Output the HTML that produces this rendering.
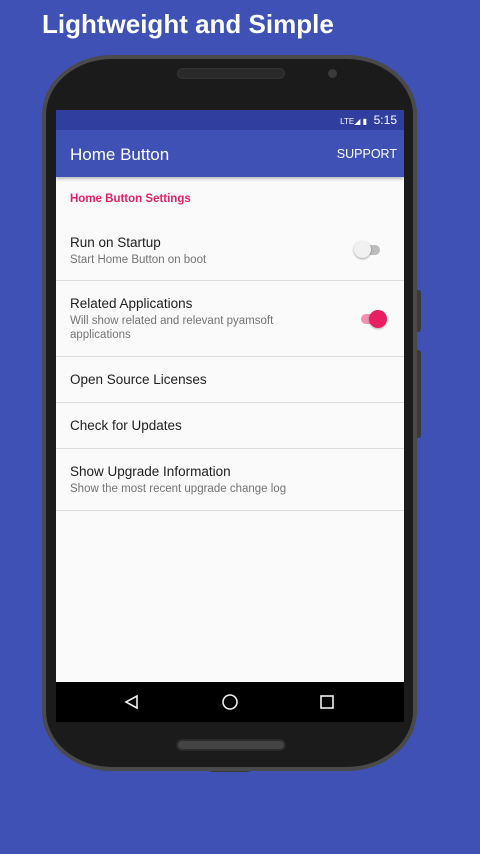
<!DOCTYPE html>
<html><head><style>
*{margin:0;padding:0;box-sizing:border-box}
body{width:480px;height:854px;background:#3f51b5;position:relative;overflow:hidden;font-family:"Liberation Sans",sans-serif}
.title{position:absolute;left:42px;top:9px;color:#fff;font-size:26px;font-weight:bold;letter-spacing:0}
.btn{position:absolute;background:#3a3a3a;border-radius:3px}
.phone{position:absolute;left:42px;top:55px;width:375px;height:716px;background:#4a4a4a;border-radius:70px/60px}
.inner{position:absolute;left:4px;top:4px;right:4px;bottom:4px;background:#1b1b1b;border-radius:66px/56px}
.spk{position:absolute;left:177px;top:68px;width:108px;height:11px;border-radius:6px;background:#2a2a2a;border:1px solid #333}
.spk2{position:absolute;left:176px;top:739px;width:110px;height:12px;border-radius:6px;background:#444;border:2px solid #2a2a2a}
.cam{position:absolute;left:328px;top:69px;width:9px;height:9px;border-radius:50%;background:#3a3a3a}
.screen{position:absolute;left:56px;top:110px;width:348px;height:612px;background:#fafafa;overflow:hidden}
.status{height:20px;background:#303f9f;color:#fff;font-size:12px;text-align:right;padding:3px 7px 0 0}
.bar{height:47px;background:#3f51b5;color:#fff;position:relative;box-shadow:0 2px 3px rgba(0,0,0,.25)}
.bar .t{position:absolute;left:14px;top:15px;font-size:17px}
.bar .s{position:absolute;right:7px;top:17px;font-size:12.5px}
.cat{color:#e91e63;font-size:11.5px;font-weight:bold;padding:16px 0 0 14px;height:46px}
.item{position:relative;border-bottom:1px solid #ddd;padding-left:14px}
.item .a{font-size:13.5px;color:#212121}
.item .b{font-size:11.5px;color:#757575;margin-top:3px;line-height:14px}
.nav{position:absolute;left:0;top:572px;width:348px;height:40px;background:#000}
</style></head><body>
<div class="title">Lightweight and Simple</div>
<div class="btn" style="left:414px;top:290px;width:7px;height:42px"></div>
<div class="btn" style="left:414px;top:350px;width:7px;height:88px"></div>
<div class="btn" style="left:209px;top:766px;width:42px;height:6px"></div>
<div class="phone"><div class="inner"></div></div>
<div class="spk"></div><div class="spk2"></div><div class="cam"></div>
<div class="screen">
<div class="status"><span style="font-size:8px">LTE◢ ▮</span> &nbsp;5:15</div>
<div class="bar"><div class="t">Home Button</div><div class="s">SUPPORT</div></div>
<div class="cat">Home Button Settings</div>
<div class="item" style="height:58px;padding-top:12px"><div class="a">Run on Startup</div><div class="b">Start Home Button on boot</div>
<div style="position:absolute;left:302px;top:22px;width:22px;height:10px;border-radius:5px;background:#bdbdbd"></div>
<div style="position:absolute;left:298px;top:18px;width:17px;height:17px;border-radius:50%;background:#f1f1f1;box-shadow:0 1px 2px rgba(0,0,0,.35)"></div></div>
<div class="item" style="height:76px;padding-top:15px"><div class="a">Related Applications</div><div class="b">Will show related and relevant pyamsoft<br>applications</div>
<div style="position:absolute;left:305px;top:33px;width:24px;height:10px;border-radius:5px;background:#f48fb1"></div>
<div style="position:absolute;left:313px;top:29px;width:18px;height:18px;border-radius:50%;background:#e91e63;box-shadow:0 1px 2px rgba(0,0,0,.3)"></div></div>
<div class="item" style="height:46px;padding-top:15px"><div class="a">Open Source Licenses</div></div>
<div class="item" style="height:46px;padding-top:15px"><div class="a">Check for Updates</div></div>
<div class="item" style="height:62px;padding-top:15px"><div class="a">Show Upgrade Information</div><div class="b">Show the most recent upgrade change log</div></div>
<div class="nav"><svg width="348" height="40"><g fill="none" stroke="#eee" stroke-width="1.6">
<path d="M70 20 L81 14 V26 Z"/><circle cx="174" cy="20" r="7"/><rect x="265" y="14" width="12" height="12"/></g></svg></div>
</div>
</body></html>
